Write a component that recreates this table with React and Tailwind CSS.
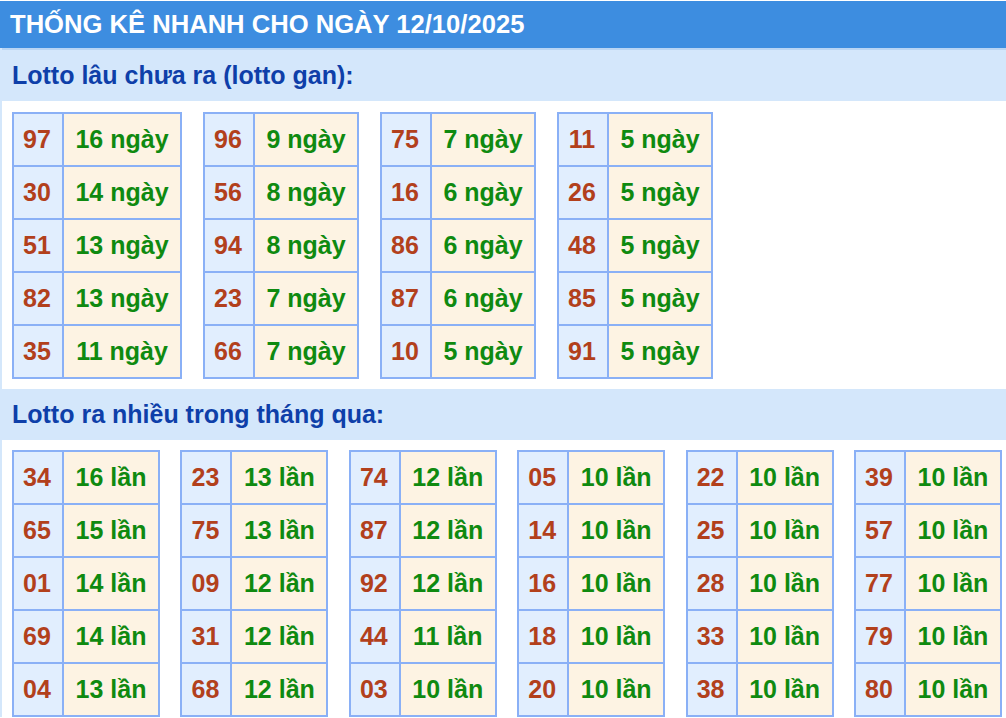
import React from "react";

const gan = [
  { w: "w-[118px]", rows: [["97", "16 ngày"], ["30", "14 ngày"], ["51", "13 ngày"], ["82", "13 ngày"], ["35", "11 ngày"]] },
  { w: "w-[104px]", rows: [["96", "9 ngày"], ["56", "8 ngày"], ["94", "8 ngày"], ["23", "7 ngày"], ["66", "7 ngày"]] },
  { w: "w-[104px]", rows: [["75", "7 ngày"], ["16", "6 ngày"], ["86", "6 ngày"], ["87", "6 ngày"], ["10", "5 ngày"]] },
  { w: "w-[104px]", rows: [["11", "5 ngày"], ["26", "5 ngày"], ["48", "5 ngày"], ["85", "5 ngày"], ["91", "5 ngày"]] },
];

const nhieu = [
  [["34", "16 lần"], ["65", "15 lần"], ["01", "14 lần"], ["69", "14 lần"], ["04", "13 lần"]],
  [["23", "13 lần"], ["75", "13 lần"], ["09", "12 lần"], ["31", "12 lần"], ["68", "12 lần"]],
  [["74", "12 lần"], ["87", "12 lần"], ["92", "12 lần"], ["44", "11 lần"], ["03", "10 lần"]],
  [["05", "10 lần"], ["14", "10 lần"], ["16", "10 lần"], ["18", "10 lần"], ["20", "10 lần"]],
  [["22", "10 lần"], ["25", "10 lần"], ["28", "10 lần"], ["33", "10 lần"], ["38", "10 lần"]],
  [["39", "10 lần"], ["57", "10 lần"], ["77", "10 lần"], ["79", "10 lần"], ["80", "10 lần"]],
];

function NumTable({ rows, w }) {
  return (
    <div className="flex flex-col border-l-2 border-t-2 border-[#8ab0f6]">
      {rows.map(([n, v], i) => (
        <div key={i} className="flex">
          <div className="flex h-[53px] w-[50px] items-center justify-center border-b-2 border-r-2 border-[#8ab0f6] bg-[#e1eefe] pr-[2px] text-[#b2401c]">
            {n}
          </div>
          <div className={`flex h-[53px] ${w} items-center justify-center border-b-2 border-r-2 border-[#8ab0f6] bg-[#fdf3e3] text-[#0f8a10]`}>
            {v}
          </div>
        </div>
      ))}
    </div>
  );
}

export default function App() {
  return (
    <div
      className="w-[1006px] bg-white pt-px font-bold"
      style={{ fontFamily: '"Liberation Sans", Arial, sans-serif' }}
    >
      <div className="flex h-[47px] items-center bg-[#3d8de0] pl-[10px] text-[25.6px] leading-none text-white">
        THỐNG KÊ NHANH CHO NGÀY 12/10/2025
      </div>
      <div className="border-l-2 border-[#d4e7fb] text-[25px] leading-none">
        <div className="flex h-[53px] items-center border-t-2 border-[#b9d5f4] bg-[#d4e7fb] pl-[10px] text-[#0e3fa9]">
          Lotto lâu chưa ra (lotto gan):
        </div>
        <div className="flex gap-[21px] pl-[10px] pt-[11px]">
          {gan.map((t, i) => (
            <NumTable key={i} rows={t.rows} w={t.w} />
          ))}
        </div>
        <div className="mt-[10px] flex h-[51px] items-center bg-[#d4e7fb] pl-[10px] text-[#0e3fa9]">
          Lotto ra nhiều trong tháng qua:
        </div>
        <div className="flex gap-[20.4px] pl-[10px] pt-[10px]">
          {nhieu.map((rows, i) => (
            <NumTable key={i} rows={rows} w="w-[96px]" />
          ))}
        </div>
      </div>
    </div>
  );
}
